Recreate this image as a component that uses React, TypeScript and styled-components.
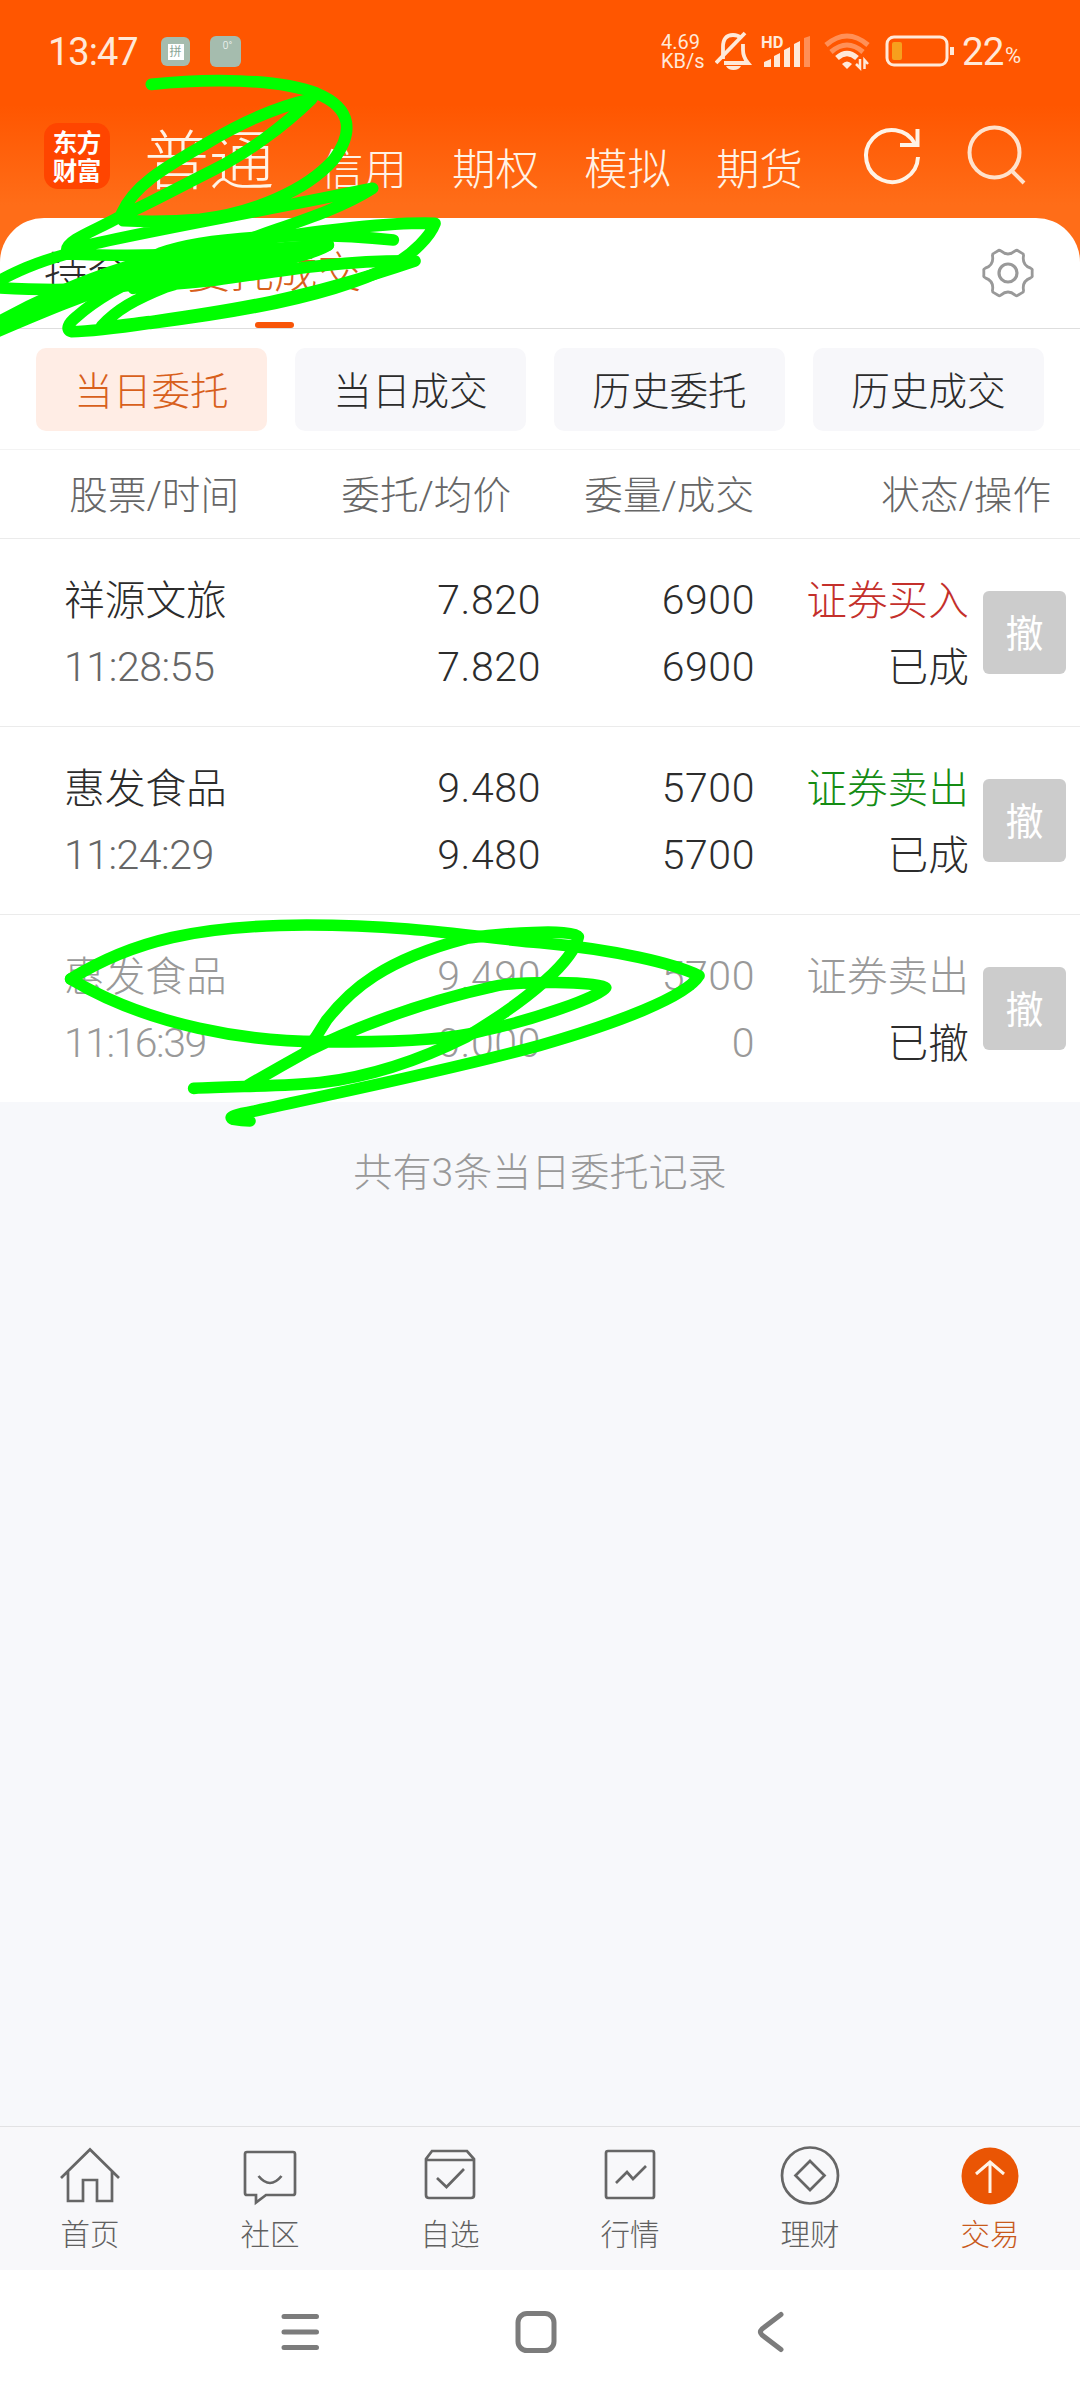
import React from "react";
import styled, { createGlobalStyle } from "styled-components";

const GlobalStyle = createGlobalStyle`
  * { box-sizing: border-box; }
  body { margin: 0; background: #fff; }
`;

const Screen = styled.div`
  position: relative;
  display: flex;
  flex-direction: column;
  width: 1080px;
  height: 2400px;
  overflow: hidden;
  background: #f7f8fb;
  font-family: Roboto, "Noto Sans CJK SC", sans-serif;
  font-weight: 300;
  color: #2c2c2c;
  white-space: nowrap;
`;

const Header = styled.header`
  flex: none;
  height: 218px;
  background: linear-gradient(#ff5600 0, #ff5600 105px, #ff6d18 205px, #ff6d18 218px);
`;

const StatusBar = styled.div`
  display: flex;
  align-items: center;
  height: 103px;
  padding-left: 48px;
  color: #ffe9d9;
`;

const Clock = styled.div`
  width: 113px;
  font-size: 38px;
  font-weight: 400;
  letter-spacing: -1px;
`;

const MiniApp = styled.div<{ $size: number; $gap: number }>`
  display: flex;
  justify-content: center;
  align-items: center;
  width: ${(p) => p.$size}px;
  height: ${(p) => p.$size}px;
  margin-right: ${(p) => p.$gap}px;
  border-radius: 6px;
  background: #a5bcae;
  font-size: 8px;
  color: #fff;
`;

const MiniTile = styled.span`
  width: 16px;
  height: 16px;
  background: #fff;
  color: #8aa596;
  font-size: 12px;
  font-weight: 400;
  line-height: 16px;
  text-align: center;
`;

const Degree = styled.span`
  margin: -12px 0 0 4px;
  font-size: 10px;
`;

const NetSpeed = styled.div`
  display: flex;
  flex-direction: column;
  width: 54px;
  font-size: 20px;
  font-weight: 400;
  line-height: 19px;
`;

const Battery = styled.div`
  width: 41px;
  font-size: 38.5px;
  font-weight: 400;
  letter-spacing: -1px;
`;

const Percent = styled.div`
  margin: 7px 0 0 2px;
  font-size: 22px;
  font-weight: 400;
`;

const StatusIcons = styled.svg`
  display: block;
  flex: none;
  margin-right: 7px;
`;

const AccountBar = styled.div`
  display: flex;
  height: 115px;
  padding-left: 44px;
  color: #fff3e6;
`;

const Logo = styled.div`
  display: grid;
  grid-template-columns: 24px 24px;
  grid-template-rows: 28px 28px;
  place-content: center;
  place-items: center;
  width: 66px;
  height: 66px;
  margin: 20px 34px 0 0;
  border-radius: 14px;
  background: #ff4500;
  color: #fff;
  font-family: "Noto Sans CJK SC", sans-serif;
  font-size: 24.5px;
  font-weight: 700;
  line-height: 28px;
`;

const Account = styled.div<{ $active?: boolean }>`
  width: ${(p) => (p.$active ? 176 : 132)}px;
  padding-top: ${(p) => (p.$active ? 14 : 25)}px;
  font-size: ${(p) => (p.$active ? 65 : 43.5)}px;
  line-height: ${(p) => (p.$active ? 90 : 86)}px;
`;

const HeaderIcons = styled.svg`
  margin: 15px 0 0 17px;
  overflow: visible;
`;

const SheetBackdrop = styled.div`
  flex: none;
  background: #ff6d18;
`;

const Sheet = styled.div`
  display: flex;
  height: 111px;
  border-radius: 44px 44px 0 0;
  border-bottom: 1px solid #dedede;
  background: #fff;
  padding: 0 46px 0 44px;
`;

const SheetTab = styled.div<{ $active?: boolean }>`
  position: relative;
  margin-right: 56px;
  padding-top: 1px;
  font-size: 43.5px;
  line-height: 110px;
  color: ${(p) => (p.$active ? "#d8601c" : "#2c2c2c")};

  &::after {
    content: "";
    display: ${(p) => (p.$active ? "block" : "none")};
    position: absolute;
    left: 68px;
    bottom: 0;
    width: 39px;
    height: 6px;
    border-radius: 3px;
    background: #f85508;
  }
`;

const Gear = styled.svg`
  margin: 29px 0 0 auto;
`;

const Filters = styled.div`
  flex: none;
  display: flex;
  gap: 28px;
  height: 121px;
  padding: 19px 36px 0;
  background: #fff;
  border-bottom: 1px solid #f3f3f3;
`;

const Chip = styled.div<{ $active?: boolean }>`
  width: 231px;
  height: 83px;
  border-radius: 10px;
  background: ${(p) => (p.$active ? "#ffede5" : "#f7f7fa")};
  color: ${(p) => (p.$active ? "#d8601c" : "#2c2c2c")};
  font-size: 38.6px;
  line-height: 87px;
  text-align: center;
`;

const TableHead = styled.div`
  flex: none;
  display: grid;
  grid-template-columns: 239px 272px 243px 297px;
  height: 89px;
  background: #fff;
  border-bottom: 1px solid #ebebeb;
  color: #666;
  font-size: 38.6px;
  line-height: 91px;
  text-align: right;
`;

const Order = styled.div`
  flex: none;
  display: grid;
  grid-template-columns: 250px 227px 214px 214px 83px;
  align-items: center;
  height: 188px;
  padding-left: 64px;
  background: #fff;
  border-bottom: 1px solid #ebebeb;
  font-size: 40.7px;

  &:last-of-type {
    height: 187px;
    border-bottom: none;
  }
`;

const OrderList = styled.section`
  flex: none;
`;

const Pair = styled.div<{ $left?: boolean }>`
  display: flex;
  flex-direction: column;
  align-items: ${(p) => (p.$left ? "flex-start" : "flex-end")};
`;

const Label = styled.span<{ $color?: string }>`
  height: 67px;
  color: ${(p) => p.$color ?? "#2c2c2c"};
  line-height: 70px;
`;

const Figure = styled.span<{ $color?: string; $spacing?: number }>`
  height: 67px;
  color: ${(p) => p.$color ?? "#2c2c2c"};
  font-size: 41px;
  line-height: 68px;
  letter-spacing: ${(p) => p.$spacing ?? 0.6}px;
`;

const CancelButton = styled.div`
  width: 83px;
  height: 83px;
  margin-left: 14px;
  border-radius: 6px;
  background: #ccc;
  color: #fff;
  font-size: 38px;
  font-weight: 400;
  line-height: 86px;
  text-align: center;
`;

const Summary = styled.div`
  flex: 1;
  padding-top: 43px;
  color: #999;
  font-size: 39.1px;
  line-height: 56px;
  text-align: center;
`;

const TabBar = styled.nav`
  flex: none;
  display: flex;
  height: 144px;
  border-top: 1px solid #e2e2e4;
  background: #f8f8fa;
`;

const TabItem = styled.div<{ $active?: boolean }>`
  display: flex;
  flex-direction: column;
  align-items: center;
  width: 180px;
  padding-top: 18px;
  color: ${(p) => (p.$active ? "#c85a1c" : "#606060")};
  font-size: 29.5px;
  line-height: 58px;
`;

const SystemNav = styled.div`
  flex: none;
  display: flex;
  justify-content: center;
  height: 130px;
  background: #fff;
`;

const Ink = styled.svg`
  position: absolute;
  left: 0;
  top: 0;
  pointer-events: none;
`;

const dim = "#999";
const orders = [
  { name: "祥源文旅", time: "11:28:55", timeSpacing: -0.4, price: "7.820", avg: "7.820", qty: "6900", done: "6900", side: "证券买入", sideColor: "#c4302b", state: "已成", off: false },
  { name: "惠发食品", time: "11:24:29", timeSpacing: -0.5, price: "9.480", avg: "9.480", qty: "5700", done: "5700", side: "证券卖出", sideColor: "#148c14", state: "已成", off: false },
  { name: "惠发食品", time: "11:16:39", timeSpacing: -1.5, price: "9.490", avg: "0.000", qty: "5700", done: "0", side: "证券卖出", sideColor: dim, state: "已撤", off: true },
];

const tabs: { label: string; icon: React.ReactNode; active?: boolean }[] = [
  { label: "首页", icon: <path d="M31 33 60 4.500 89 33M38 27V56H53V35H67V56H82V27" /> },
  { label: "社区", icon: <path d="M37 7H83Q85 7 85 9V48Q85 50 83 50H56L46 57.500V50H37Q35 50 35 48V9Q35 7 37 7ZM48.500 31Q60 45 71.500 31" /> },
  { label: "自选", icon: <path d="M42 6H77L84 14V50Q84 53 81 53H39Q36 53 36 50V14ZM36 15H84M47 33 56.500 42 74 24" /> },
  { label: "行情", icon: <path d="M38 6H82Q84 6 84 8V51Q84 53 82 53H38Q36 53 36 51V8Q36 6 38 6ZM46 38 57 27 63 34 76 21" /> },
  {
    label: "理财",
    icon: (
      <>
        <circle cx="60" cy="30.500" r="28" />
        <path d="M60 16 74.500 30.500 60 45 45.500 30.500Z" />
      </>
    ),
  },
  {
    label: "交易",
    active: true,
    icon: (
      <>
        <circle cx="60" cy="31" r="28.500" fill="#ea5504" stroke="none" />
        <path d="M60 48V18M46 29 60 17 74 29" stroke="#fff3e6" strokeWidth="3" />
      </>
    ),
  },
];

const gearPoints = (() => {
  let d = "";
  const at = (r: number, deg: number) => {
    const a = (deg * Math.PI) / 180;
    return `${(25 + r * Math.cos(a)).toFixed(2)} ${(25 + r * Math.sin(a)).toFixed(2)}`;
  };
  for (let i = 0; i < 6; i++) {
    const c = i * 60;
    d += `${i === 0 ? "M" : "L"}${at(23.2, c - 12)} Q${at(25, c - 9)} ${at(24.3, c - 6)} L${at(24.3, c + 6)} Q${at(25, c + 9)} ${at(23.2, c + 12)} Q${at(16, c + 30)} ${at(23.2, c + 48)} `;
  }
  return d + "Z";
})();

export default function App() {
  return (
    <Screen>
      <GlobalStyle />
      <Header>
        <StatusBar>
          <Clock>13:47</Clock>
          <MiniApp $size={29} $gap={20}>
            <MiniTile>拼</MiniTile>
          </MiniApp>
          <MiniApp $size={31} $gap={420}>
            <Degree>0°</Degree>
          </MiniApp>
          <NetSpeed>
            <span>4.69</span>
            <span>KB/s</span>
          </NetSpeed>
          <StatusIcons width="240" height="44" viewBox="0 0 240 44" fill="none" stroke="#ffe9d9">
            <g transform="translate(-1 0)">
              <path d="M9 29V17Q9 5 19 5Q24 5 27 8M29 14V20Q29 27 34 33H10" strokeWidth="3.800" />
              <path d="M2 33 31 3" strokeWidth="3.800" />
              <path d="M12 36H27Q25 40 19.500 40Q14 40 12 36Z" fill="#ffe9d9" stroke="none" />
            </g>
            <text x="46" y="18" fill="#ffe9d9" stroke="none" fontSize="16.500" fontWeight="700">HD</text>
            <g fill="#ffe9d9" stroke="none">
              <path d="M49 37V32L56 29V37ZM59 37V26L65 23V37ZM69 37V20L75 17V37ZM79 37V14L85 11V37Z" />
              <path d="M89 37V8L95 6V37Z" opacity=".4" />
            </g>
            <path d="M111 15Q132 -3 153 15" strokeWidth="5" opacity=".4" />
            <path d="M116 22Q132 8 148 22" strokeWidth="5" opacity=".4" />
            <path d="M122 28Q132 19 142 28" strokeWidth="5.500" />
            <path d="M127 34Q132 29 137 34L132 39Z" fill="#ffe9d9" stroke="none" />
            <path d="M145 29V38L141 34M149.500 39V30L153 34" strokeWidth="2.500" />
            <rect x="172" y="7" width="60" height="28" rx="7" strokeWidth="3" />
            <rect x="177" y="12" width="10" height="18" rx="2" fill="#f7a01d" stroke="none" />
            <path d="M237 17V25" strokeWidth="4" />
          </StatusIcons>
          <Battery>22</Battery>
          <Percent>%</Percent>
        </StatusBar>
        <AccountBar>
          <Logo>
            <span>东</span>
            <span>方</span>
            <span>财</span>
            <span>富</span>
          </Logo>
          <Account $active>普通</Account>
          <Account>信用</Account>
          <Account>期权</Account>
          <Account>模拟</Account>
          <Account>期货</Account>
          <HeaderIcons width="180" height="72" viewBox="0 0 180 72" fill="none" stroke="#fff3e6" strokeWidth="4">
            <path d="M50.200 26.200A26 26 0 1 0 53 39" />
            <path d="M52.500 11V27H35" />
            <circle cx="129.500" cy="34.500" r="25" stroke="#ffe2cc" />
            <path d="M146 52 159 65" stroke="#ffe2cc" />
          </HeaderIcons>
        </AccountBar>
      </Header>
      <SheetBackdrop>
        <Sheet>
          <SheetTab>持仓</SheetTab>
          <SheetTab $active>委托成交</SheetTab>
          <Gear width="52" height="52" viewBox="-1 -1 52 52" fill="none" stroke="#999" strokeWidth="2.800" strokeLinejoin="round">
            <path d={gearPoints} />
            <circle cx="25" cy="25" r="9" strokeWidth="3.200" />
          </Gear>
        </Sheet>
      </SheetBackdrop>
      <Filters>
        <Chip $active>当日委托</Chip>
        <Chip>当日成交</Chip>
        <Chip>历史委托</Chip>
        <Chip>历史成交</Chip>
      </Filters>
      <TableHead>
        <span>股票/时间</span>
        <span>委托/均价</span>
        <span>委量/成交</span>
        <span>状态/操作</span>
      </TableHead>
      <OrderList>
        {orders.map((o) => (
          <Order key={o.time}>
            <Pair $left>
              <Label $color={o.off ? dim : undefined}>{o.name}</Label>
              <Figure $color={o.off ? dim : "#666"} $spacing={o.timeSpacing}>{o.time}</Figure>
            </Pair>
            <Pair>
              <Figure $color={o.off ? dim : undefined}>{o.price}</Figure>
              <Figure $color={o.off ? dim : undefined}>{o.avg}</Figure>
            </Pair>
            <Pair>
              <Figure $color={o.off ? dim : undefined}>{o.qty}</Figure>
              <Figure $color={o.off ? dim : undefined}>{o.done}</Figure>
            </Pair>
            <Pair>
              <Label $color={o.sideColor}>{o.side}</Label>
              <Label>{o.state}</Label>
            </Pair>
            <CancelButton>撤</CancelButton>
          </Order>
        ))}
      </OrderList>
      <Summary>共有3条当日委托记录</Summary>
      <TabBar>
        {tabs.map((t) => (
          <TabItem key={t.label} $active={t.active}>
            <svg width="120" height="61" viewBox="0 0 120 61" fill="none" stroke="#666" strokeWidth="2.700">
              {t.icon}
            </svg>
            {t.label}
          </TabItem>
        ))}
      </TabBar>
      <SystemNav>
        <svg width="540" height="124" viewBox="0 0 540 124" fill="none" stroke="#7c7c7c" strokeWidth="5" strokeLinecap="round" strokeLinejoin="round">
          <path d="M14 46.500H46.500M14 62H46.500M14 77.500H46.500" />
          <rect x="248" y="43.500" width="36" height="37" rx="9" />
          <path d="M511 44.500 492 59Q489 62 492 65L511 79.500" />
        </svg>
      </SystemNav>
      <Ink width="1080" height="1200" viewBox="0 0 3240 3600" fill="none" stroke="#0f0" strokeWidth="35" strokeLinecap="round" strokeLinejoin="round">
        <path d="M454 253C620 235 830 235 950 280C1060 325 1060 400 1000 480C920 570 760 640 600 658C520 665 430 665 370 662L365 640C400 560 480 510 620 430C720 370 830 320 935 297C850 380 740 460 640 510C540 560 440 615 360 650C290 690 200 720 200 750C400 700 700 650 1118 565C1000 640 840 680 700 735C600 770 400 770 200 762C100 790 50 815 -15 848L-15 863C200 875 420 868 560 820C700 770 900 735 985 735C920 775 750 805 500 828" />
        <path d="M-20 985C150 890 300 840 480 760C600 715 900 690 1180 720" />
        <path d="M-20 975C200 850 450 760 700 730C900 700 1150 665 1305 670C1290 710 1240 760 1180 795C1000 890 700 940 450 970C350 985 250 995 215 995C195 990 205 970 230 950C320 870 430 830 500 790" />
        <path d="M-20 1000C120 940 260 880 400 840M985 735C840 800 640 815 500 860C400 900 350 930 305 978C350 980 400 970 450 965C700 930 900 900 1245 783C1000 780 800 820 650 840C560 850 480 855 400 865" />
        <path d="M440 780 700 735 960 720 960 745 800 785 500 830 300 855Z" fill="#0f0" stroke="none" />
        <path d="M212 2937C400 2820 600 2776 920 2775C1250 2775 1450 2815 1620 2828C1850 2850 2020 2890 2097 2927C2060 2990 1850 3070 1620 3136C1350 3210 1050 3270 764 3333C710 3343 680 3350 700 3358Q725 3363 750 3363" />
        <path d="M212 2937C450 3080 750 3125 960 3125C1150 3128 1350 3120 1450 3092C1600 3060 1800 2990 1817 2963C1800 2945 1550 2940 1470 2962C1250 3010 1050 3090 930 3150Q840 3200 745 3255" />
        <path d="M581 3265C700 3258 850 3260 960 3248C1150 3225 1300 3160 1400 3110C1600 2990 1720 2880 1735 2810C1720 2785 1500 2800 1400 2815C1150 2880 1050 2970 980 3060Q950 3110 920 3150" />
      </Ink>
    </Screen>
  );
}
